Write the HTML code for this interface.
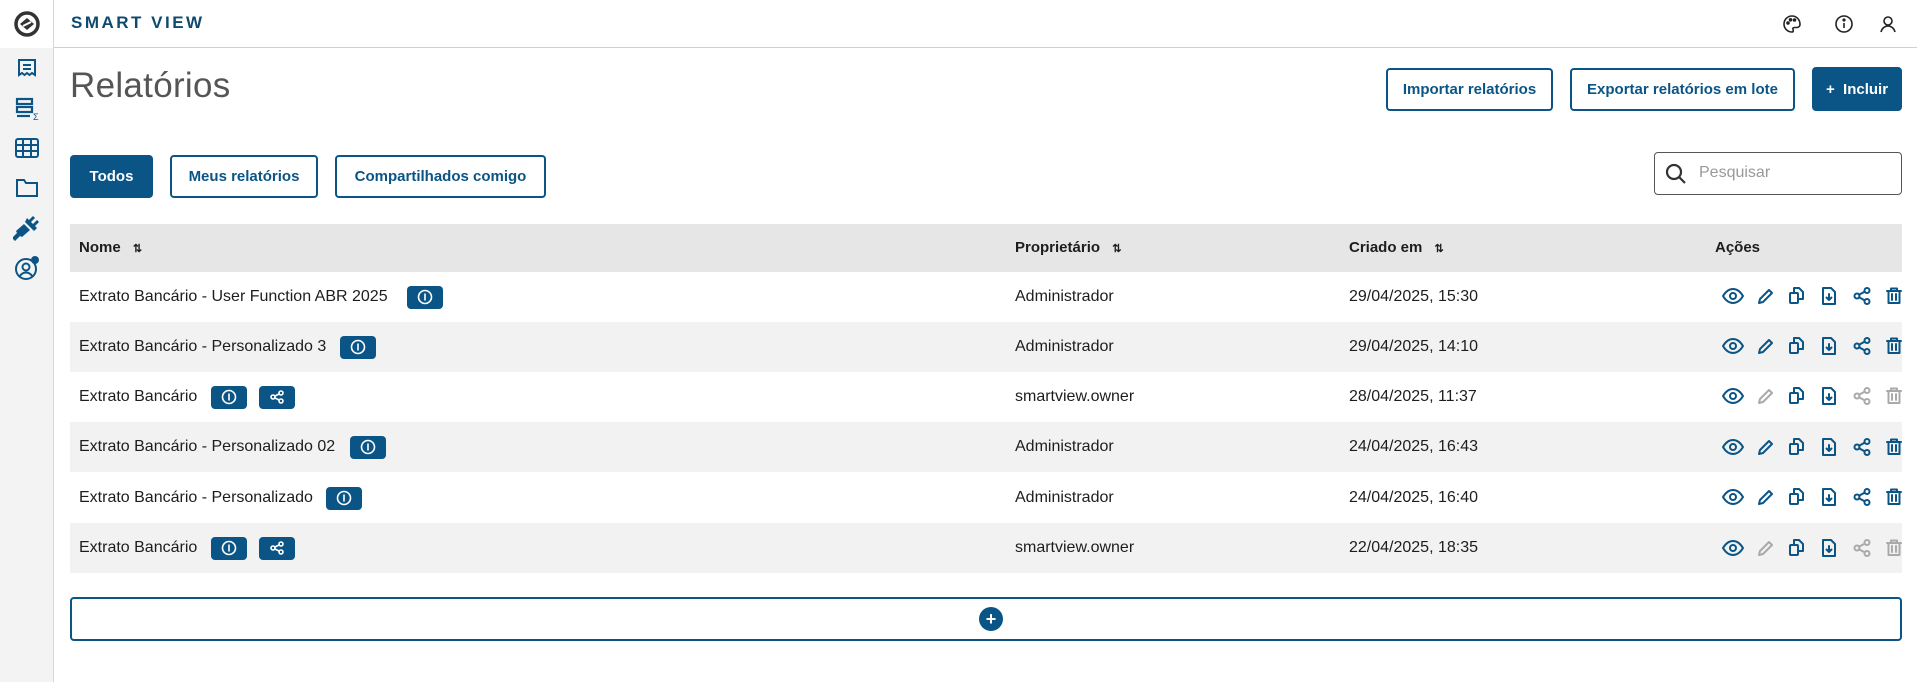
<!DOCTYPE html>
<html><head><meta charset="utf-8"><style>
*{box-sizing:border-box;margin:0;padding:0}
body{width:1917px;height:682px;background:#fff;font-family:"Liberation Sans",sans-serif;color:#1d1d1d;position:relative;overflow:hidden;font-size:15px}
.a{position:absolute}
.side{left:0;top:0;width:54px;height:682px;background:#f3f3f3;border-right:1px solid #d6d6d6}
.top{left:0;top:0;width:1917px;height:48px;border-bottom:1px solid #d0d0d0;background:transparent}
.btn{position:absolute;border:2px solid #0b5586;border-radius:4px;color:#0b5586;font-weight:bold;font-size:15px;display:flex;align-items:center;justify-content:center;background:#fff}
.btn.f{background:#0b5586;color:#fff}
.row{position:absolute;left:70px;width:1832px;height:50px;display:flex;align-items:center;font-size:16px}
.row span{position:absolute}
.bd{position:absolute;width:36px;height:23px;background:#0b5586;border-radius:4px;display:flex;align-items:center;justify-content:center}
</style></head><body>
<div class="a side"></div>
<div class="a top"></div>
<div class="a" style="left:0;top:0;width:54px;height:48px;background:#fff;border-right:1px solid #d6d6d6"></div>
<svg class="a" style="left:14px;top:11px" width="26" height="26" viewBox="0 0 26 26"><circle cx="13" cy="13" r="11" fill="none" stroke="#333" stroke-width="3.5"/><path d="M6 13 L13 7 L20 13 L13 19Z" fill="#333"/><path d="M9 15 L17 11" stroke="#fff" stroke-width="2"/></svg>
<div class="a" style="left:71px;top:13px;font-size:17px;font-weight:bold;letter-spacing:2.5px;color:#0e4a6e">SMART VIEW</div>
<svg class="a" style="left:1782px;top:14px" width="20" height="20" viewBox="0 0 20 20" fill="none" stroke="#222" stroke-width="1.6"><path d="M10 2a8 8 0 1 0 0 16c1.5 0 1.5-1.5 1-2.5s0-2 1.5-2H15a3 3 0 0 0 3-3C18 5.5 14.5 2 10 2z"/><circle cx="6" cy="9" r="1" fill="#222"/><circle cx="8.5" cy="5.8" r="1" fill="#222"/><circle cx="12.5" cy="6" r="1" fill="#222"/></svg>
<svg class="a" style="left:1834px;top:14px" width="20" height="20" viewBox="0 0 20 20" fill="none" stroke="#222" stroke-width="1.6"><circle cx="10" cy="10" r="8"/><path d="M10 9v5"/><circle cx="10" cy="6" r=".8" fill="#222"/></svg>
<svg class="a" style="left:1879px;top:14px" width="18" height="20" viewBox="0 0 18 20" fill="none" stroke="#222" stroke-width="1.6"><circle cx="9" cy="7" r="4"/><path d="M2 18c1-4 4-6 7-6s6 2 7 6"/></svg>
<svg class="a" style="left:16px;top:57px" width="22" height="22" viewBox="0 0 22 22" fill="none" stroke="#0b5586" stroke-width="2"><path d="M3 3h16v15l-3-2-2.5 2-2.5-2-2.5 2-2.5-2-3 2z"/><path d="M7 8h8M7 12h8"/></svg>
<svg class="a" style="left:15px;top:96px" width="26" height="26" viewBox="0 0 26 26" fill="none" stroke="#0b5586" stroke-width="2.2"><rect x="2" y="3" width="15" height="5"/><rect x="2" y="11" width="15" height="5"/><path d="M2 20h13"/><text x="18" y="24" font-size="9" fill="#0b5586" stroke="none" font-family="Liberation Sans">Σ</text></svg>
<svg class="a" style="left:14px;top:137px" width="26" height="22" viewBox="0 0 26 22" fill="none" stroke="#0b5586" stroke-width="2"><rect x="2" y="2" width="22" height="18" rx="2"/><path d="M2 8h22M2 14h22M9 2v18M17 2v18"/></svg>
<svg class="a" style="left:15px;top:176px" width="24" height="22" viewBox="0 0 24 22" fill="none" stroke="#0b5586" stroke-width="2"><path d="M2 4h7l2 3h11v13H2z"/></svg>
<svg class="a" style="left:13px;top:215px" width="28" height="28" viewBox="0 0 28 28" fill="#0b5586"><path d="M2 26l5-5 2 1 8-7-6-6-8 7 1 2-5 5z"/><path d="M12 7l9 9 3-3-2-2 4-4-2-2-4 4-2-2 4-4-2-2-4 4-2-2z"/></svg>
<svg class="a" style="left:13px;top:254px" width="28" height="28" viewBox="0 0 28 28" fill="none" stroke="#0b5586" stroke-width="2"><circle cx="13" cy="15" r="10"/><circle cx="13" cy="13" r="3.5"/><path d="M6.5 22.5c2-3 4-4 6.5-4s4.5 1 6.5 4"/><circle cx="22" cy="6" r="3" fill="#0b5586"/></svg>
<div class="a" style="left:70px;top:66px;font-size:35px;font-weight:300;color:#555;letter-spacing:.3px">Relatórios</div>
<div class="btn" style="left:1386px;top:68px;width:167px;height:43px">Importar relatórios</div>
<div class="btn" style="left:1570px;top:68px;width:225px;height:43px">Exportar relatórios em lote</div>
<div class="btn f" style="left:1812px;top:67px;width:90px;height:44px">+&nbsp; Incluir</div>
<div class="btn f" style="left:70px;top:155px;width:83px;height:43px">Todos</div>
<div class="btn" style="left:170px;top:155px;width:148px;height:43px">Meus relatórios</div>
<div class="btn" style="left:335px;top:155px;width:211px;height:43px">Compartilhados comigo</div>
<div class="a" style="left:1654px;top:152px;width:248px;height:43px;border:1px solid #555;border-radius:4px"></div>
<svg class="a" style="left:1664px;top:162px" width="24" height="24" viewBox="0 0 24 24" fill="none" stroke="#333" stroke-width="2.2"><circle cx="10" cy="10" r="7"/><path d="M15 15l6 6"/></svg>
<div class="a" style="left:1699px;top:164px;color:#999;font-size:16px">Pesquisar</div>
<div class="a" style="left:70px;top:224px;width:1832px;height:48px;background:#e6e6e6"></div>
<div class="a" style="left:79px;top:239px;font-weight:bold;font-size:15px">Nome <span style="font-size:11px;margin-left:8px">⇅</span></div>
<div class="a" style="left:1015px;top:239px;font-weight:bold;font-size:15px">Proprietário <span style="font-size:11px;margin-left:8px">⇅</span></div>
<div class="a" style="left:1349px;top:239px;font-weight:bold;font-size:15px">Criado em <span style="font-size:11px;margin-left:8px">⇅</span></div>
<div class="a" style="left:1715px;top:239px;font-weight:bold;font-size:15px">Ações</div>
<div class="row" style="top:272px;background:#fff"><span style="left:9px">Extrato Bancário - User Function ABR 2025</span><div class="bd" style="left:337px"><svg width="16" height="16" viewBox="0 0 16 16" fill="none" stroke="#fff" stroke-width="1.6"><circle cx="8" cy="8" r="6.5"/><path d="M8 4.5v7"/></svg></div><span style="left:945px">Administrador</span><span style="left:1279px">29/04/2025, 15:30</span></div>
<div class="row" style="top:322px;background:#f2f2f2"><span style="left:9px">Extrato Bancário - Personalizado 3</span><div class="bd" style="left:270px"><svg width="16" height="16" viewBox="0 0 16 16" fill="none" stroke="#fff" stroke-width="1.6"><circle cx="8" cy="8" r="6.5"/><path d="M8 4.5v7"/></svg></div><span style="left:945px">Administrador</span><span style="left:1279px">29/04/2025, 14:10</span></div>
<div class="row" style="top:372px;background:#fff"><span style="left:9px">Extrato Bancário</span><div class="bd" style="left:141px"><svg width="16" height="16" viewBox="0 0 16 16" fill="none" stroke="#fff" stroke-width="1.6"><circle cx="8" cy="8" r="6.5"/><path d="M8 4.5v7"/></svg></div><div class="bd" style="left:189px"><svg width="16" height="16" viewBox="0 0 16 16" fill="none" stroke="#fff" stroke-width="1.6"><circle cx="4" cy="8" r="2"/><circle cx="12" cy="4" r="2"/><circle cx="12" cy="12" r="2"/><path d="M6 7l4-2M6 9l4 2"/></svg></div><span style="left:945px">smartview.owner</span><span style="left:1279px">28/04/2025, 11:37</span></div>
<div class="row" style="top:422px;background:#f2f2f2"><span style="left:9px">Extrato Bancário - Personalizado 02</span><div class="bd" style="left:280px"><svg width="16" height="16" viewBox="0 0 16 16" fill="none" stroke="#fff" stroke-width="1.6"><circle cx="8" cy="8" r="6.5"/><path d="M8 4.5v7"/></svg></div><span style="left:945px">Administrador</span><span style="left:1279px">24/04/2025, 16:43</span></div>
<div class="row" style="top:473px;background:#fff"><span style="left:9px">Extrato Bancário - Personalizado</span><div class="bd" style="left:256px"><svg width="16" height="16" viewBox="0 0 16 16" fill="none" stroke="#fff" stroke-width="1.6"><circle cx="8" cy="8" r="6.5"/><path d="M8 4.5v7"/></svg></div><span style="left:945px">Administrador</span><span style="left:1279px">24/04/2025, 16:40</span></div>
<div class="row" style="top:523px;background:#f2f2f2"><span style="left:9px">Extrato Bancário</span><div class="bd" style="left:141px"><svg width="16" height="16" viewBox="0 0 16 16" fill="none" stroke="#fff" stroke-width="1.6"><circle cx="8" cy="8" r="6.5"/><path d="M8 4.5v7"/></svg></div><div class="bd" style="left:189px"><svg width="16" height="16" viewBox="0 0 16 16" fill="none" stroke="#fff" stroke-width="1.6"><circle cx="4" cy="8" r="2"/><circle cx="12" cy="4" r="2"/><circle cx="12" cy="12" r="2"/><path d="M6 7l4-2M6 9l4 2"/></svg></div><span style="left:945px">smartview.owner</span><span style="left:1279px">22/04/2025, 18:35</span></div>
<svg class="a" style="left:1710px;top:272px" width="207" height="302" viewBox="0 0 207 302" fill="none" stroke-width="2" stroke-linecap="round" stroke-linejoin="round">
<defs>
<g id="eye"><path d="M-10 0c3-5 6.5-7 10-7s7 2 10 7c-3 5-6.5 7-10 7s-7-2-10-7z"/><circle r="3"/></g>
<g id="pen"><path d="M-7 7l1-4 9-9 3 3-9 9z"/></g>
<g id="cp"><rect x="-7" y="-3" width="8" height="10" rx="1"/><path d="M-3-3v-5h5l4 4v7h-5"/></g>
<g id="dl"><path d="M-6-8h8l4 4v12h-12z"/><path d="M0-2v6M-2.5 1.5L0 4 2.5 1.5"/></g>
<g id="sh"><circle cx="-5" cy="0" r="2.5"/><circle cx="5" cy="-5.5" r="2.5"/><circle cx="5" cy="5.5" r="2.5"/><path d="M-3-1.2l5.5-3M-3 1.2l5.5 3"/></g>
<g id="tr"><path d="M-7-5h14M-3-5v-2.5h6v2.5M-5.5-5v12h11v-12M-2-2v6M2-2v6"/></g>
</defs>
<g stroke="#0b5586"><use href="#eye" x="23" y="24"/><use href="#pen" x="56" y="24"/><use href="#cp" x="87" y="24"/><use href="#dl" x="119" y="24"/><use href="#sh" x="152" y="24"/><use href="#tr" x="184" y="24"/></g>
<g stroke="#0b5586"><use href="#eye" x="23" y="74"/><use href="#pen" x="56" y="74"/><use href="#cp" x="87" y="74"/><use href="#dl" x="119" y="74"/><use href="#sh" x="152" y="74"/><use href="#tr" x="184" y="74"/></g>
<g stroke="#0b5586"><use href="#eye" x="23" y="124"/><use href="#cp" x="87" y="124"/><use href="#dl" x="119" y="124"/></g>
<g stroke="#aaa"><use href="#pen" x="56" y="124"/><use href="#sh" x="152" y="124"/><use href="#tr" x="184" y="124"/></g>
<g stroke="#0b5586"><use href="#eye" x="23" y="175"/><use href="#pen" x="56" y="175"/><use href="#cp" x="87" y="175"/><use href="#dl" x="119" y="175"/><use href="#sh" x="152" y="175"/><use href="#tr" x="184" y="175"/></g>
<g stroke="#0b5586"><use href="#eye" x="23" y="225"/><use href="#pen" x="56" y="225"/><use href="#cp" x="87" y="225"/><use href="#dl" x="119" y="225"/><use href="#sh" x="152" y="225"/><use href="#tr" x="184" y="225"/></g>
<g stroke="#0b5586"><use href="#eye" x="23" y="276"/><use href="#cp" x="87" y="276"/><use href="#dl" x="119" y="276"/></g>
<g stroke="#aaa"><use href="#pen" x="56" y="276"/><use href="#sh" x="152" y="276"/><use href="#tr" x="184" y="276"/></g>
</svg>
<div class="a" style="left:70px;top:597px;width:1832px;height:44px;border:2px solid #0b5586;border-radius:4px"></div>
<div class="a" style="left:979px;top:607px;width:24px;height:24px;border-radius:50%;background:#0b5586;color:#fff;font-weight:bold;font-size:18px;line-height:24px;text-align:center">+</div>
</body></html>
